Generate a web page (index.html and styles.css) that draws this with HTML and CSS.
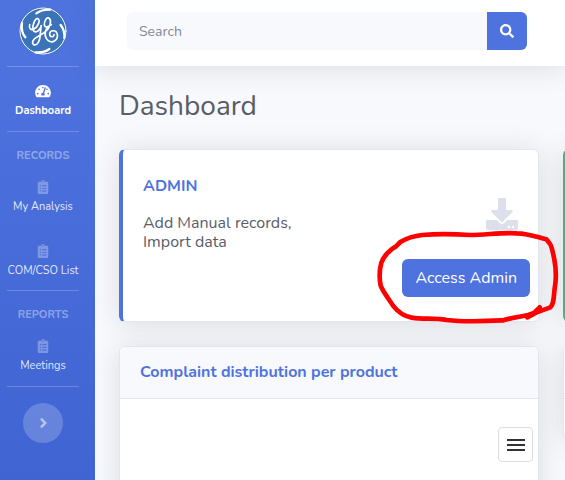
FILE: index.html
```html
<!DOCTYPE html>
<html lang="en">
<head>
<meta charset="utf-8">
<title>Dashboard</title>
<link rel="stylesheet" href="styles.css">
</head>
<body>
<svg class="sprite" aria-hidden="true">
  <symbol id="clipboard" viewBox="0 0 384 512"><path d="M336 64h-80c0-35.300-28.700-64-64-64s-64 28.700-64 64H48C21.500 64 0 85.500 0 112v352c0 26.500 21.500 48 48 48h288c26.500 0 48-21.500 48-48V112c0-26.500-21.500-48-48-48zM96 424c-13.300 0-24-10.700-24-24s10.700-24 24-24 24 10.700 24 24-10.700 24-24 24zm0-96c-13.300 0-24-10.700-24-24s10.700-24 24-24 24 10.700 24 24-10.700 24-24 24zm0-96c-13.300 0-24-10.700-24-24s10.700-24 24-24 24 10.700 24 24-10.700 24-24 24zm96-192c13.300 0 24 10.700 24 24s-10.700 24-24 24-24-10.700-24-24 10.700-24 24-24zm128 368c0 4.400-3.600 8-8 8H168c-4.400 0-8-3.600-8-8v-16c0-4.400 3.600-8 8-8h144c4.400 0 8 3.600 8 8v16zm0-96c0 4.400-3.600 8-8 8H168c-4.400 0-8-3.600-8-8v-16c0-4.400 3.600-8 8-8h144c4.400 0 8 3.600 8 8v16zm0-96c0 4.400-3.600 8-8 8H168c-4.400 0-8-3.600-8-8v-16c0-4.400 3.600-8 8-8h144c4.400 0 8 3.600 8 8v16z"/></symbol>
</svg>
<div class="layout">
  <nav class="sidebar">
    <a class="brand" href="#" aria-label="Home">
      <svg class="logo" viewBox="57 20 144 144" fill="none" stroke="#fff" stroke-linecap="round" stroke-linejoin="round">
        <circle cx="129" cy="92" r="72" fill="#3b73b9" stroke="none"/>
        <circle cx="129" cy="92" r="69" stroke-width="3"/>
        <path stroke-width="7" d="M109 39Q126 27 151 28M182 74Q195 91 193 113M148 146Q130 159 106 156M76 111Q62 94 66 68"/>
        <path stroke-width="5" d="M89 73C86 84 93 91 102 86C113 81 123 58 114 55C104 53 93 83 102 93C111 98 120 88 124 76C119 93 124 112 115 126C108 138 96 135 98 124C101 110 122 107 137 93C151 82 155 61 148 54C139 47 132 67 133 74C136 86 148 77 154 73C134 80 130 108 144 120C158 131 175 118 172 102C169 88 150 88 149 101C149 111 161 112 162 103"/>
      </svg>
    </a>
    <hr>
    <a class="nav-item active" href="#">
      <svg viewBox="0 0 576 512"><path d="M288 32C128.940 32 0 160.940 0 320c0 52.800 14.250 102.260 39.060 144.800 5.610 9.620 16.300 15.200 27.440 15.200h443c11.140 0 21.830-5.580 27.440-15.200C561.750 422.260 576 372.800 576 320c0-159.060-128.940-288-288-288zm0 64c14.710 0 26.580 10.130 30.320 23.650-1.110 2.260-2.640 4.230-3.450 6.670l-9.220 27.670c-5.130 3.490-10.970 6.010-17.640 6.010-17.670 0-32-14.330-32-32S270.330 96 288 96zM96 384c-17.670 0-32-14.330-32-32s14.330-32 32-32 32 14.330 32 32-14.330 32-32 32zm48-160c-17.670 0-32-14.330-32-32s14.330-32 32-32 32 14.330 32 32-14.330 32-32 32zm246.770-72.410l-61.330 184C343.130 347.330 352 364.540 352 384c0 11.720-3.380 22.550-8.880 32H232.880c-5.500-9.450-8.880-20.280-8.880-32 0-33.940 26.500-61.430 59.900-63.590l61.340-184.010c4.170-12.560 17.730-19.450 30.360-15.170 12.570 4.190 19.350 17.790 15.170 30.360zm14.660 57.200l15.520-46.550c3.470-1.290 7.130-2.230 11.050-2.230 17.670 0 32 14.330 32 32s-14.330 32-32 32c-11.380-.01-20.890-6.280-26.570-15.220zM480 384c-17.670 0-32-14.330-32-32s14.330-32 32-32 32 14.330 32 32-14.330 32-32 32z"/></svg>
      <span>Dashboard</span>
    </a>
    <hr>
    <h2>Records</h2>
    <a class="nav-item" href="#"><svg><use href="#clipboard"/></svg><span>My Analysis</span></a>
    <a class="nav-item" href="#"><svg><use href="#clipboard"/></svg><span>COM/CSO List</span></a>
    <hr class="tight">
    <h2>Reports</h2>
    <a class="nav-item" href="#"><svg><use href="#clipboard"/></svg><span>Meetings</span></a>
    <hr>
    <button class="toggle" type="button" aria-label="Toggle sidebar">
      <svg viewBox="0 0 256 512"><path d="M224.300 273l-136 136c-9.400 9.400-24.600 9.400-33.900 0l-22.600-22.600c-9.400-9.400-9.400-24.600 0-33.900l96.400-96.400-96.400-96.400c-9.400-9.400-9.400-24.600 0-33.900L54.300 103c9.400-9.400 24.600-9.400 33.900 0l136 136c9.500 9.400 9.500 24.600.1 34z"/></svg>
    </button>
  </nav>
  <div class="page">
    <header class="topbar">
      <form class="search" role="search">
        <input type="search" placeholder="Search" aria-label="Search">
        <button type="button" aria-label="Submit search">
          <svg viewBox="0 0 512 512"><path d="M505 442.700L405.300 343c-4.500-4.500-10.600-7-17-7H372c27.600-35.300 44-79.700 44-128C416 93.100 322.900 0 208 0S0 93.100 0 208s93.100 208 208 208c48.300 0 92.700-16.400 128-44v16.300c0 6.400 2.500 12.500 7 17l99.700 99.700c9.400 9.400 24.600 9.400 33.900 0l28.300-28.300c9.400-9.400 9.400-24.600.1-34zM208 336c-70.700 0-128-57.200-128-128 0-70.700 57.200-128 128-128 70.700 0 128 57.200 128 128 0 70.700-57.200 128-128 128z"/></svg>
        </button>
      </form>
    </header>
    <main>
      <h1>Dashboard</h1>
      <div class="cards">
        <section class="card admin">
          <h2>ADMIN</h2>
          <div class="summary">
            <p>Add Manual records,<br>Import data</p>
            <svg class="download" viewBox="0 0 512 512"><path d="M216 0h80c13.300 0 24 10.700 24 24v168h87.700c17.800 0 26.700 21.500 14.100 34.100L269.700 378.300c-7.500 7.500-19.800 7.500-27.300 0L90.100 226.100c-12.600-12.600-3.700-34.100 14.100-34.100H192V24c0-13.300 10.700-24 24-24zm296 376v112c0 13.300-10.700 24-24 24H24c-13.300 0-24-10.700-24-24V376c0-13.300 10.700-24 24-24h146.700l49 49c20.100 20.100 52.500 20.100 72.600 0l49-49H488c13.300 0 24 10.700 24 24zm-124 88c0-11-9-20-20-20s-20 9-20 20 9 20 20 20 20-9 20-20zm64 0c0-11-9-20-20-20s-20 9-20 20 9 20 20 20 20-9 20-20z"/></svg>
          </div>
          <button class="primary" type="button">Access Admin</button>
          <svg class="marker" viewBox="0 0 585 450" aria-hidden="true"><path d="M472 412L486 405L509 382M472 412L498 398L541 382C552 373 551 350 554 325C560 293 557 260 553 238C547 210 545 195 538 189L529 178C505 173 480 161 440 160C390 157 350 165 300 165C240 161 190 162 157 165C130 168 108 176 91 186L78 199C60 208 40 230 34 248C28 270 27 292 32 317C39 336 57 357 69 377C83 395 98 408 125 413C160 419 190 413 230 420C290 427 360 423 400 421C430 411 450 411 475 405L500 396"/></svg>
        </section>
        <section class="card next" aria-hidden="true"></section>
        <section class="card chart">
          <h2>Complaint distribution per product</h2>
          <div class="chart-body">
            <button class="menu" type="button" aria-label="Chart menu"><svg viewBox="0 0 18 14"><path d="M0 2h18M0 7h18M0 12h18"/></svg></button>
          </div>
        </section>
        <section class="card side" aria-hidden="true"><div class="side-head"></div></section>
      </div>
    </main>
  </div>
</div>
</body>
</html>
```
FILE: styles.css
```css
* { box-sizing: border-box; }
body {
  margin: 0;
  overflow: hidden;
  background: #f8f9fc;
  color: #5a5c69;
  font: 16px/19px Nunito, Lato, sans-serif;
}
h1, h2, p { margin: 0; }
button, input { font: inherit; border: 0; }
a { text-decoration: none; }
.sprite { display: none; }
.layout { display: flex; min-height: 100vh; }

.sidebar {
  display: flex;
  flex: 0 0 95px;
  flex-direction: column;
  align-items: center;
  padding: 0 16px 0 7px;
  background: linear-gradient(180deg, #4e73df 10%, #3d62d1 105%);
}
.brand { height: 66px; padding-top: 7px; }
.logo { display: block; width: 48px; height: 48px; }
.sidebar hr {
  width: 100%;
  height: 1px;
  margin: 0;
  border: 0;
  background: rgba(255, 255, 255, .2);
}
.sidebar h2 {
  margin-top: 16px;
  color: rgba(255, 255, 255, .4);
  font-size: 11px;
  line-height: 15px;
  text-transform: uppercase;
}
.nav-item {
  display: flex;
  flex-direction: column;
  align-items: center;
  gap: 5px;
  height: 64px;
  padding-top: 17px;
  color: rgba(255, 255, 255, .85);
  font-size: 11px;
  line-height: 16px;
  white-space: nowrap;
}
.nav-item svg { width: 16px; height: 14px; fill: rgba(255, 255, 255, .3); }
.nav-item.active { color: #fff; font-weight: 700; }
.nav-item.active svg { fill: #fff; }
.sidebar hr.tight { margin-top: -1px; }
.nav-item + hr:not(.tight) { flex-shrink: 0; }
.toggle {
  display: grid;
  place-items: center;
  width: 40px;
  height: 40px;
  margin-top: 16px;
  padding: 0;
  border-radius: 50%;
  background: rgba(255, 255, 255, .2);
}
.toggle svg { width: 9px; height: 16px; fill: rgba(255, 255, 255, .5); }

.page { flex: 1; min-width: 0; }
.topbar {
  position: relative;
  padding: 12px 38px 16px 32px;
  background: #fff;
  box-shadow: 0 2px 28px rgba(58, 59, 69, .15);
}
.search { display: flex; height: 38px; }
.search input {
  flex: 1;
  min-width: 0;
  padding: 0 12px;
  border-radius: 6px 0 0 6px;
  background: #f8f9fc;
  font-size: 14px;
}
.search input::placeholder { color: #858796; opacity: 1; }
.search button {
  display: grid;
  place-items: center;
  width: 40px;
  padding: 0;
  border-radius: 0 6px 6px 0;
  background: #4e73df;
}
.search svg { width: 14px; height: 14px; fill: #fff; }

main { padding: 23px 0 0 24px; }
h1 { margin-bottom: 26px; font-size: 28px; font-weight: 400; line-height: 34px; }
.cards {
  display: grid;
  grid-template-columns: minmax(0, 1fr) 398px;
  gap: 24px;
  margin-right: -396px;
}
.card {
  border: 1px solid #e3e6f0;
  border-radius: 6px;
  background: #fff;
  box-shadow: 0 2px 28px rgba(58, 59, 69, .15);
}
.card h2 { color: #4e73df; font-size: 16px; line-height: 19px; }
.admin {
  position: relative;
  z-index: 1;
  display: flex;
  flex-direction: column;
  padding: 27px 8px 24px 20px;
  border-left: 4px solid #4e73df;
}
.summary {
  display: flex;
  justify-content: space-between;
  margin: 2px 12px 7px 0;
}
.summary p { padding-top: 16px; }
.download { width: 32px; height: 32px; fill: #dddfeb; }
.primary {
  align-self: flex-end;
  height: 38px;
  padding: 0 13px;
  border-radius: 6px;
  background: #4e73df;
  color: #fff;
}
.marker {
  position: absolute;
  top: 30px;
  right: -27px;
  width: 195px;
  height: 150px;
  fill: none;
  stroke: #f00;
  stroke-width: 14px;
  stroke-linecap: round;
  stroke-linejoin: round;
  pointer-events: none;
}
.next { border-left: 4px solid #1cc88a; }
.chart { min-height: 180px; }
.chart h2 {
  padding: 16px 20px;
  border-bottom: 1px solid #e3e6f0;
  border-radius: 5px 5px 0 0;
  background: #f8f9fc;
}
.chart-body { display: flex; justify-content: flex-end; padding: 28px 5px; }
.menu {
  display: grid;
  place-items: center;
  width: 35px;
  height: 35px;
  padding: 0;
  border: 1px solid #ddd;
  border-radius: 4px;
  background: #fff;
}
.menu svg { width: 18px; height: 14px; stroke: #333; stroke-width: 2; }
.side { align-self: start; height: 92px; }
.side-head { height: 52px; border-bottom: 1px solid #e3e6f0; background: #f8f9fc; }
```
